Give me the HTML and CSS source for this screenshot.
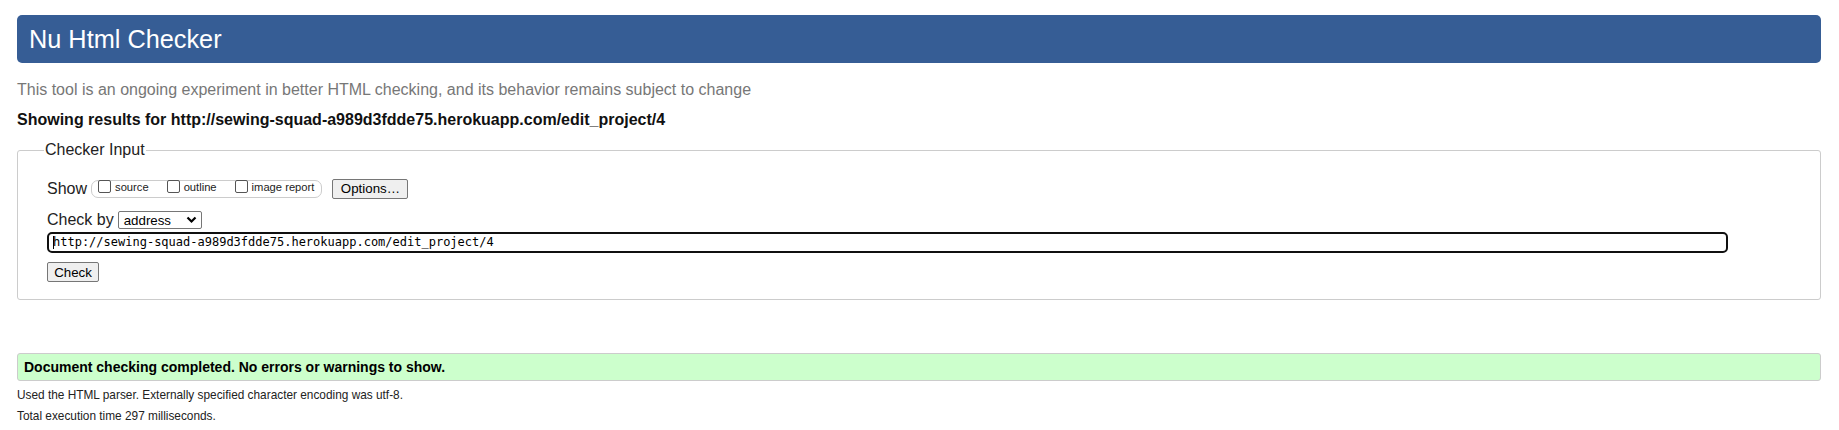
FILE: index.html
```html
<!DOCTYPE html>
<html>
<head>
<meta charset="utf-8">
<title>Nu Html Checker</title>
<link rel="stylesheet" href="styles.css">
</head>
<body>
<h1 class="title">Nu Html Checker</h1>
<p class="tagline">This tool is an ongoing experiment in better HTML checking, and its behavior remains subject to change</p>
<p class="showing">Showing results for http://sewing-squad-a989d3fdde75.herokuapp.com/edit_project/4</p>
<fieldset class="input-box">
  <legend class="legend">Checker Input</legend>
  <div class="row">
    <span class="lbl">Show</span>
    <span class="opts">
      <label class="opt"><span class="cb"></span>source</label>
      <label class="opt"><span class="cb"></span>outline</label>
      <label class="opt"><span class="cb"></span>image report</label>
    </span>
    <button class="btn btn-options">Options…</button>
  </div>
  <div class="row row-by">
    <span class="lbl">Check by</span>
    <span class="select">address<svg class="chev" width="11" height="8" viewBox="0 0 11 8"><path d="M1.5 1.5 L5.5 5.5 L9.5 1.5" fill="none" stroke="#000" stroke-width="2.2"/></svg></span>
  </div>
  <div class="url"><span class="caret"></span>http://sewing-squad-a989d3fdde75.herokuapp.com/edit_project/4</div>
  <div class="row-check"><button class="btn btn-check">Check</button></div>
</fieldset>
<div class="success">Document checking completed. No errors or warnings to show.</div>
<p class="meta">Used the HTML parser. Externally specified character encoding was utf-8.</p>
<p class="meta">Total execution time 297 milliseconds.</p>
</body>
</html>
```

FILE: styles.css
```css
html, body {
  margin: 0;
  background: #fff;
}
body {
  padding: 15px 18px 0 17px;
  font-family: "Liberation Sans", Arial, sans-serif;
  color: #222;
}
.title {
  margin: 0;
  height: 48px;
  box-sizing: border-box;
  padding: 0 12px;
  background: #365d95;
  color: #fff;
  border-radius: 5px;
  font-size: 25.3px;
  font-weight: normal;
  line-height: 48px;
}
.tagline {
  margin: 17px 0 0 0;
  font-size: 16px;
  line-height: 20px;
  color: #777;
}
.showing {
  margin: 10px 0 0 0;
  font-size: 16px;
  line-height: 20px;
  font-weight: bold;
  color: #111;
}
.input-box {
  margin: 11px 0 0 0;
  padding: 19px 29px 17px 29px;
  border: 1px solid #ccc;
  border-radius: 3px;
  min-width: 0;
}
.legend {
  padding: 0 1px;
  margin-left: -3px;
  font-size: 16px;
  color: #222;
}
.row {
  display: flex;
  align-items: center;
  height: 21px;
}
.lbl {
  font-size: 16px;
  margin-right: 4px;
}
.opts {
  display: flex;
  align-items: flex-start;
  box-sizing: border-box;
  height: 18px;
  border: 1px solid #ccc;
  border-radius: 7px;
  padding: 0 7px 0 6px;
  gap: 18px;
  font-size: 11.2px;
  color: #222;
}
.opt {
  display: flex;
  align-items: flex-start;
  line-height: 13px;
}
.cb {
  display: inline-block;
  flex: none;
  width: 11px;
  height: 11px;
  border: 1px solid #555;
  border-radius: 2px;
  margin-right: 4px;
  margin-top: -1px;
}
.btn {
  font-family: "Liberation Sans", Arial, sans-serif;
  background: #efefef;
  border: 1px solid #767676;
  border-radius: 2px;
  color: #000;
  padding: 0 6px;
  margin: 0;
}
.btn-options {
  margin-left: 10px;
  height: 20px;
  font-size: 13.3px;
  width: 76px;
}
.row-by {
  margin-top: 12px;
  height: 18px;
}
.select {
  display: inline-flex;
  align-items: center;
  justify-content: space-between;
  box-sizing: border-box;
  width: 84px;
  height: 18px;
  border: 1px solid #767676;
  border-radius: 2px;
  padding: 0 4px 0 5px;
  font-size: 13.3px;
  color: #000;
}
.url {
  margin-top: 3px;
  height: 21px;
  box-sizing: border-box;
  width: calc(100% - 63px);
  border: 2px solid #101010;
  border-radius: 5px;
  padding: 0 4px;
  font-family: "DejaVu Sans Mono", "Liberation Mono", monospace;
  font-size: 12px;
  line-height: 17px;
  color: #000;
  display: flex;
  align-items: center;
  white-space: nowrap;
}
.caret {
  display: inline-block;
  width: 1px;
  height: 13px;
  background: #000;
  margin-right: -1px;
}
.row-check {
  margin-top: 9px;
  display: flex;
}
.btn-check {
  height: 20px;
  width: 52px;
  font-size: 13.3px;
}
.success {
  margin-top: 53px;
  height: 28px;
  box-sizing: border-box;
  border: 1px solid #ccc;
  border-radius: 3px;
  background: #ccffcc;
  padding: 0 0 0 6px;
  font-size: 14px;
  font-weight: bold;
  line-height: 26px;
  color: #000;
}
.meta {
  margin: 0;
  font-size: 11.85px;
  line-height: 21px;
  color: #222;
}
.success + .meta {
  margin-top: 4px;
}
```
